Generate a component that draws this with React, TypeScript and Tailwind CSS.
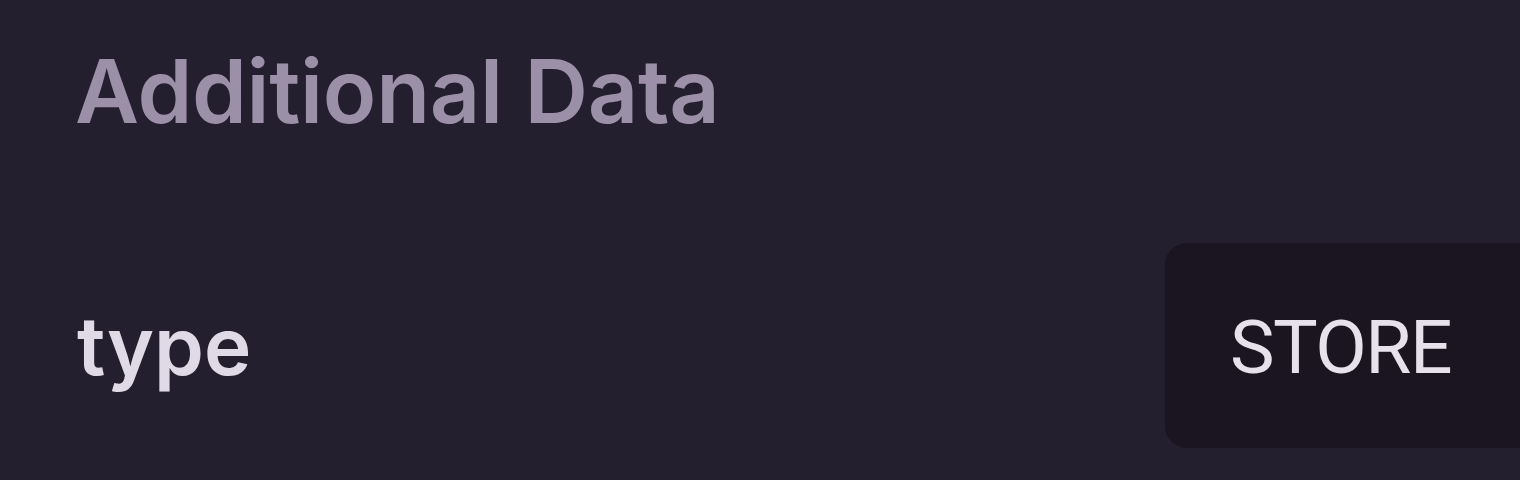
export default function App() {
  return (
    <div className="h-[480px] w-[1520px] overflow-hidden bg-[#241f2e] font-['Inter',sans-serif]">
      <div className="pl-[75px] pt-[36px]">
        <h2 className="text-[88px] font-semibold leading-[110px] tracking-[-0.3px] text-[#9c8fa8]">
          Additional Data
        </h2>
      </div>
      <div className="mt-[97px] flex items-center justify-between pl-[77px]">
        <span className="text-[80px] font-semibold leading-none text-[#e0dae6]">type</span>
        <div className="flex h-[205px] w-[400px] -mr-[45px] items-center rounded-[22px] bg-[#1a1520] pl-[65px] pt-[4px]">
          <span className="font-['Roboto',sans-serif] text-[75px] leading-none tracking-[-1.5px] text-[#e6e1ea]">
            STORE
          </span>
        </div>
      </div>
    </div>
  );
}
